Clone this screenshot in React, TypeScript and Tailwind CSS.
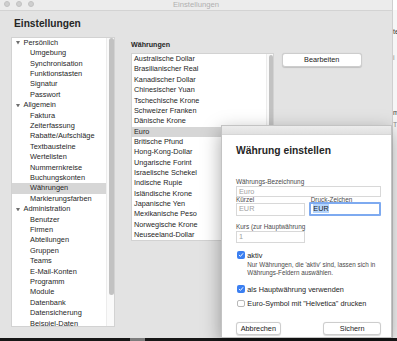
import type { ReactNode } from 'react'

const TREE = [
  { label: 'Persönlich', items: ['Umgebung', 'Synchronisation', 'Funktionstasten', 'Signatur', 'Passwort'] },
  {
    label: 'Allgemein',
    items: [
      'Faktura',
      'Zeiterfassung',
      'Rabatte/Aufschläge',
      'Textbausteine',
      'Wertelisten',
      'Nummernkreise',
      'Buchungskonten',
      'Währungen',
      'Markierungsfarben',
    ],
  },
  {
    label: 'Administration',
    items: [
      'Benutzer',
      'Firmen',
      'Abteilungen',
      'Gruppen',
      'Teams',
      'E-Mail-Konten',
      'Programm',
      'Module',
      'Datenbank',
      'Datensicherung',
      'Beispiel-Daten',
    ],
  },
]

const CURRENCIES = [
  'Australische Dollar',
  'Brasilianischer Real',
  'Kanadischer Dollar',
  'Chinesischer Yuan',
  'Tschechische Krone',
  'Schweizer Franken',
  'Dänische Krone',
  'Euro',
  'Britische Pfund',
  'Hong-Kong-Dollar',
  'Ungarische Forint',
  'Israelische Schekel',
  'Indische Rupie',
  'Isländische Krone',
  'Japanische Yen',
  'Mexikanische Peso',
  'Norwegische Krone',
  'Neuseeland-Dollar',
]

function Disclosure() {
  return (
    <svg width="4" height="3.5" viewBox="0 0 8 7" className="shrink-0">
      <path d="M0 0h8L4 7z" fill="#707070" />
    </svg>
  )
}

function Checkbox({ checked }: { checked?: boolean }) {
  if (!checked) {
    return <span className="h-[7.5px] w-[7.5px] shrink-0 rounded-[2px] border border-[#b8b8b8] bg-white" />
  }
  return (
    <span className="flex h-[7.5px] w-[7.5px] shrink-0 items-center justify-center rounded-[2px] bg-[#3b7ff1]">
      <svg width="6" height="6" viewBox="0 0 12 12">
        <path
          d="M2.5 6.4l2.4 2.4 4.7-5.6"
          fill="none"
          stroke="#fff"
          strokeWidth="1.9"
          strokeLinecap="round"
          strokeLinejoin="round"
        />
      </svg>
    </span>
  )
}

function CheckRow({ checked, children }: { checked?: boolean; children: ReactNode }) {
  return (
    <div className="flex h-[9px] items-center gap-[2.5px] pl-[1.3px] text-[7.3px] leading-[9px]">
      <Checkbox checked={checked} />
      <span>{children}</span>
    </div>
  )
}

function Field({ value, className }: { value: string; className: string }) {
  return (
    <div className={`border border-[#d8d8d8] bg-white pl-[2px] text-[7.3px] text-[#a2a2a2] ${className}`}>
      {value}
    </div>
  )
}

function Button({ label, className }: { label: string; className: string }) {
  return (
    <div
      className={`rounded-[3px] border border-[#cdcdcd] bg-white text-center text-[7.3px] text-[#222] shadow-[0_0.5px_1px_rgba(0,0,0,0.15)] ${className}`}
    >
      {label}
    </div>
  )
}

export default function App() {
  return (
    <div className="relative flex h-[341px] w-[397px] flex-col overflow-hidden bg-[#171717] font-['Liberation_Sans',Arial,sans-serif] text-[#262626]">
      <div className="flex h-[337.5px] shrink-0">
        {/* main window */}
        <div className="flex w-[392px] flex-col bg-[#e3e3e3]">
          <div className="flex h-[11px] shrink-0 items-center border-b border-[#d3d3d3] bg-[#ececec]">
            <div className="-mt-[2px] flex w-[50px] gap-[5.7px] pl-[4.3px]">
              <span className="h-[6px] w-[6px] rounded-full border border-[#c2c2c2] bg-[#cfcfcf]" />
              <span className="h-[6px] w-[6px] rounded-full border border-[#c2c2c2] bg-[#cfcfcf]" />
              <span className="h-[6px] w-[6px] rounded-full border border-[#c2c2c2] bg-[#cfcfcf]" />
            </div>
            <div className="flex-1 pr-[50px] text-center text-[7.7px] leading-[10px] text-[#b0b0b0]">Einstellungen</div>
          </div>

          <div className="flex flex-1 flex-col px-[11px]">
            <h1 className="mt-[6.5px] pl-[3px] text-[10.2px] font-bold leading-[12px]">Einstellungen</h1>

            <div className="mt-[7.2px] flex">
              {/* tree */}
              <div className="flex h-[290.3px] w-[104px] shrink-0 border border-[#d2d2d2] bg-white">
                <div className="flex-1 overflow-hidden text-[7.4px] leading-[10.42px]">
                  {TREE.map((group) => (
                    <div key={group.label}>
                      <div className="flex h-[10.42px] items-center gap-[4px] pl-[3.5px]">
                        <Disclosure />
                        <span>{group.label}</span>
                      </div>
                      {group.items.map((item) => (
                        <div
                          key={item}
                          className={`h-[10.42px] pl-[18px] ${item === 'Währungen' ? 'bg-[#d6d6d6]' : ''}`}
                        >
                          {item}
                        </div>
                      ))}
                    </div>
                  ))}
                </div>
                <div className="w-[8px] shrink-0 border-l border-[#ececec] bg-[#fafafa] pt-[0.6px]">
                  <div className="ml-[1.5px] h-[256.7px] w-[5px] rounded-full bg-[#c2c2c2]" />
                </div>
              </div>

              {/* currencies */}
              <div className="ml-[16px] flex flex-col">
                <div className="mt-[4.5px] text-[7.1px] font-bold leading-[9px]">Währungen</div>
                <div className="mt-[2.5px] flex items-start">
                  <div className="flex h-[188px] w-[143px] border border-[#d2d2d2] bg-white">
                    <div className="flex-1 overflow-hidden pt-[0.4px] text-[7.3px] leading-[10.36px]">
                      {CURRENCIES.map((c) => (
                        <div key={c} className={`h-[10.36px] pl-[2px] ${c === 'Euro' ? 'bg-[#d6d6d6]' : ''}`}>
                          {c}
                        </div>
                      ))}
                    </div>
                    <div className="w-[7px] shrink-0 border-l border-[#ececec] bg-[#fafafa] pt-[1.3px]">
                      <div className="ml-[2px] h-[140px] w-[4px] rounded-full bg-[#c2c2c2]" />
                    </div>
                  </div>
                  <Button label="Bearbeiten" className="ml-[7.7px] h-[14px] w-[80px] text-[7.2px] leading-[12px]" />
                </div>
              </div>
            </div>
          </div>
        </div>

        {/* window behind, right edge */}
        <div className="flex w-[5px] flex-col overflow-hidden border-l border-[#cfcfcf] bg-[#f6f6f6] text-[7px] leading-[8px] text-[#333]">
          <div className="h-[10px] shrink-0 bg-white" />
          <span className="mt-[18px]">te</span>
          <span className="mt-[18px] text-[#888]">i</span>
          <span className="mt-[47px]">m</span>
          <span className="mt-[4px] text-[#888]">T</span>
        </div>
      </div>

      {/* desktop strip */}
      <div className="flex flex-1">
        <div className="ml-[130px] w-[15px] bg-[#7d7d7d]" />
      </div>

      {/* sheet: Währung einstellen */}
      <div className="absolute left-[221px] top-[125px] flex h-[212.5px] w-[171px] flex-col border border-[#c3c3c3] bg-white shadow-[0_6px_18px_rgba(0,0,0,0.35)]">
        <div className="h-[9px] shrink-0 border-b border-[#d6d6d6] bg-gradient-to-b from-[#ececec] to-[#e0e0e0]" />
        <div className="flex flex-col pl-[14px] pr-[10px]">
          <h2 className="mt-[9px] text-[10.3px] font-bold leading-[14px]">Währung einstellen</h2>

          <div className="mt-[20.5px] text-[6.4px] leading-[5px] text-[#4a4a4a]">Währungs-Bezeichnung</div>
          <Field value="Euro" className="mt-[2px] h-[11px] w-full leading-[9px]" />

          <div className="flex text-[6.4px] leading-[5px] text-[#4a4a4a]">
            <span className="w-[74.7px]">Kürzel</span>
            <span>Druck-Zeichen</span>
          </div>
          <div className="mt-[1.5px] flex items-start">
            <Field value="EUR" className="h-[12.5px] w-[70px] leading-[10.5px]" />
            <div className="-mt-[0.8px] ml-[4px] h-[14.2px] w-[72.3px] rounded-[1px] border-2 border-[#7eaaf0] bg-white pl-[2px] text-[7.3px] leading-[10.2px]">
              <span className="bg-[#b4d4fc] text-[#1d1d1d]">EUR</span>
            </div>
          </div>

          <div className="mt-[7.3px] text-[6.4px] leading-[5px] text-[#4a4a4a]">Kurs (zur Hauptwährung</div>
          <Field value="1" className="mt-[2.2px] h-[12.5px] w-[69px] leading-[10.5px]" />

          <div className="mt-[7.3px]">
            <CheckRow checked>aktiv</CheckRow>
          </div>
          <p className="mt-[1.3px] pl-[11.3px] text-[6.3px] leading-[8.4px] text-[#4a4a4a]">
            Nur Währungen, die 'aktiv' sind, lassen sich in
            <br />
            Währungs-Feldern auswählen.
          </p>

          <div className="mt-[6.9px]">
            <CheckRow checked>als Hauptwährung verwenden</CheckRow>
          </div>
          <div className="mt-[5.4px]">
            <CheckRow>Euro-Symbol mit "Helvetica" drucken</CheckRow>
          </div>

          <div className="mt-[13.8px] flex justify-between">
            <Button label="Abbrechen" className="h-[13.3px] w-[44.7px] leading-[11.3px]" />
            <Button label="Sichern" className="h-[13.3px] w-[57.7px] leading-[11.3px]" />
          </div>
        </div>
      </div>
    </div>
  )
}
